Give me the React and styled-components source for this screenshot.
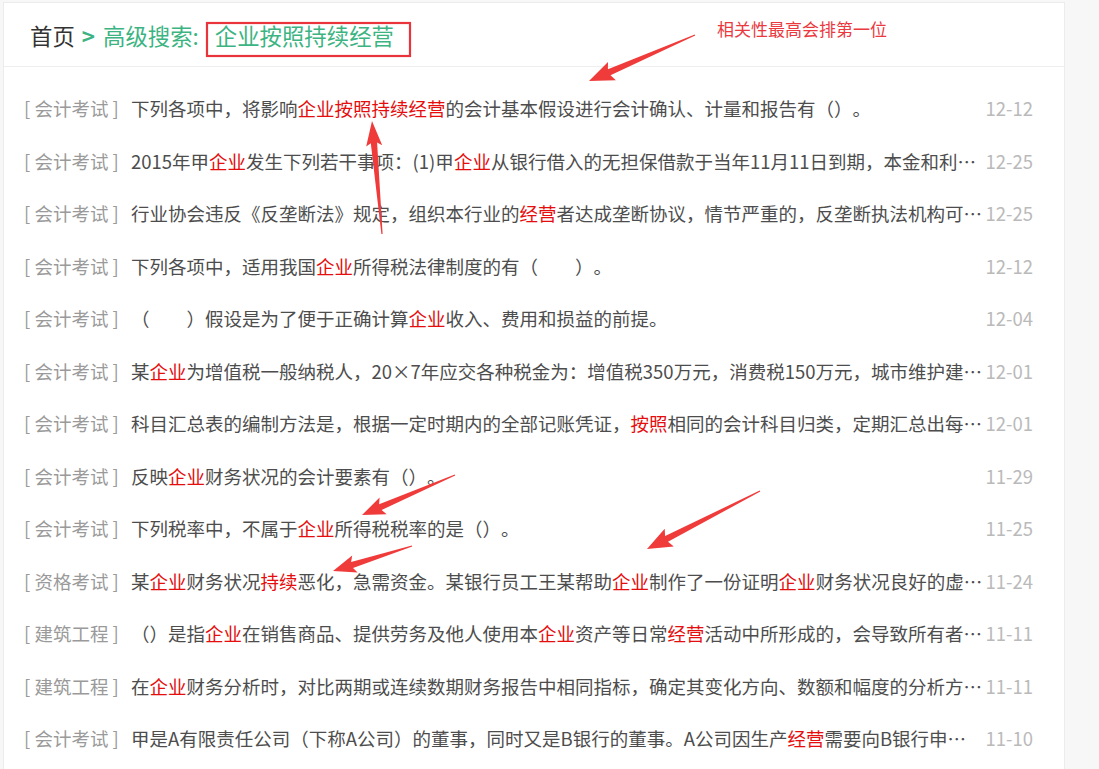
import React from "react";
import styled, { createGlobalStyle } from "styled-components";

const Global = createGlobalStyle`
  html, body { margin: 0; padding: 0; }
  body {
    background: #f7f7f7;
    font-family: "Noto Sans CJK SC", "Microsoft YaHei", "Noto Sans", sans-serif;
    text-spacing-trim: space-all;
  }
`;

const Page = styled.div`
  position: relative;
  width: 1099px;
  height: 769px;
  overflow: hidden;
  padding: 2px 0 0 3px;
  box-sizing: border-box;
`;

const Panel = styled.div`
  width: 1062px;
  min-height: 800px;
  background: #fff;
  border: 1px solid #ececec;
  box-sizing: border-box;
`;

const Header = styled.div`
  height: 64px;
  display: flex;
  align-items: center;
  padding-left: 26px;
  border-bottom: 1px solid #eeeeee;
  box-sizing: border-box;
  font-size: 22.4px;
  color: #333;
  white-space: pre;
`;

const Crumb = styled.span`
  color: ${(p) => (p.$green ? "#3cb482" : "#333")};
  font-weight: ${(p) => (p.$bold ? 700 : 400)};
  margin: ${(p) => p.$m || "0"};
`;

const List = styled.div`
  padding: 15px 31px 0 20px;
`;

const Row = styled.div`
  display: flex;
  align-items: center;
  height: 52.5px;
  font-size: 18.5px;
`;

const Tag = styled.span`
  flex: none;
  width: 107px;
  color: #9a9a9a;
  white-space: pre;
`;

const Content = styled.span`
  flex: 1;
  min-width: 0;
  overflow: hidden;
  white-space: nowrap;
  text-overflow: ellipsis;
  color: #4d4d4d;
`;

const Hl = styled.span`
  color: #e50d0d;
`;

const DateCell = styled.span`
  flex: none;
  margin-left: 2px;
  color: #bababa;
  white-space: nowrap;
`;

const Overlay = styled.svg`
  position: absolute;
  left: 0;
  top: 0;
  pointer-events: none;
`;

const Note = styled.div`
  position: absolute;
  left: 717px;
  top: 16px;
  font-size: 17px;
  color: #ea3a3f;
  white-space: nowrap;
`;

const rows = [
  ["会计考试", "下列各项中，将影响{企业按照持续经营}的会计基本假设进行会计确认、计量和报告有（）。", "12-12"],
  ["会计考试", "2015年甲{企业}发生下列若干事项：(1)甲{企业}从银行借入的无担保借款于当年11月11日到期，本金和利息均未偿还", "12-25"],
  ["会计考试", "行业协会违反《反垄断法》规定，组织本行业的{经营}者达成垄断协议，情节严重的，反垄断执法机构可以依法撤销登记", "12-25"],
  ["会计考试", "下列各项中，适用我国{企业}所得税法律制度的有（　　）。", "12-12"],
  ["会计考试", "（　　）假设是为了便于正确计算{企业}收入、费用和损益的前提。", "12-04"],
  ["会计考试", "某{企业}为增值税一般纳税人，20×7年应交各种税金为：增值税350万元，消费税150万元，城市维护建设税35万元", "12-01"],
  ["会计考试", "科目汇总表的编制方法是，根据一定时期内的全部记账凭证，{按照}相同的会计科目归类，定期汇总出每一个会计科目", "12-01"],
  ["会计考试", "反映{企业}财务状况的会计要素有（）。", "11-29"],
  ["会计考试", "下列税率中，不属于{企业}所得税税率的是（）。", "11-25"],
  ["资格考试", "某{企业}财务状况{持续}恶化，急需资金。某银行员工王某帮助{企业}制作了一份证明{企业}财务状况良好的虚假材料", "11-24"],
  ["建筑工程", "（）是指{企业}在销售商品、提供劳务及他人使用本{企业}资产等日常{经营}活动中所形成的，会导致所有者权益增加", "11-11"],
  ["建筑工程", "在{企业}财务分析时，对比两期或连续数期财务报告中相同指标，确定其变化方向、数额和幅度的分析方法是", "11-11"],
  ["会计考试", "甲是A有限责任公司（下称A公司）的董事，同时又是B银行的董事。A公司因生产{经营}需要向B银行申请贷款", "11-10"],
];

function renderText(t) {
  const parts = t.split(/(\{[^}]*\})/);
  return parts.map((p, i) =>
    p.startsWith("{") ? <Hl key={i}>{p.slice(1, -1)}</Hl> : <React.Fragment key={i}>{p}</React.Fragment>
  );
}

function arrowPoints(x1, y1, x2, y2, h = 20, hw = 9, sw = 3.2, tw = 0.6) {
  const dx = x2 - x1;
  const dy = y2 - y1;
  const L = Math.hypot(dx, dy);
  const ux = dx / L;
  const uy = dy / L;
  const nx = -uy;
  const ny = ux;
  const neckX = x2 - ux * h;
  const neckY = y2 - uy * h;
  const barbX = x2 - ux * (h + 3);
  const barbY = y2 - uy * (h + 3);
  const pts = [
    [x1 + nx * tw, y1 + ny * tw],
    [neckX + nx * sw, neckY + ny * sw],
    [barbX + nx * hw, barbY + ny * hw],
    [x2, y2],
    [barbX - nx * hw, barbY - ny * hw],
    [neckX - nx * sw, neckY - ny * sw],
    [x1 - nx * tw, y1 - ny * tw],
  ];
  return pts.map((p) => p[0].toFixed(1) + "," + p[1].toFixed(1)).join(" ");
}

const arrows = [
  [695, 35, 589, 81, 22, 10],
  [382, 234, 372, 121, 22, 8],
  [455, 475, 362, 515, 20, 9],
  [760, 491, 647, 549, 22, 10],
  [412, 546, 333, 571, 20, 9],
];

export default function App() {
  return (
    <>
      <Global />
      <Page>
        <Panel>
          <Header>
            <Crumb>首页</Crumb>
            <Crumb $green $bold $m="0 8px 0 7px">&gt;</Crumb>
            <Crumb $green>高级搜索:</Crumb>
            <Crumb $green $m="0 0 0 16px">企业按照持续经营</Crumb>
          </Header>
          <List>
            {rows.map(([tag, text, date], i) => (
              <Row key={i}>
                <Tag>[ {tag} ]</Tag>
                <Content>{renderText(text)}</Content>
                <DateCell>{date}</DateCell>
              </Row>
            ))}
          </List>
        </Panel>
        <Note>相关性最高会排第一位</Note>
        <Overlay width="1099" height="769" viewBox="0 0 1099 769">
          <rect x="207" y="23" width="203" height="33" fill="none" stroke="#e8343a" strokeWidth="2.2" />
          {arrows.map(([a, b, c, d, h, hw], i) => (
            <polygon key={i} points={arrowPoints(a, b, c, d, h, hw)} fill="#f03b3b" />
          ))}
        </Overlay>
      </Page>
    </>
  );
}
